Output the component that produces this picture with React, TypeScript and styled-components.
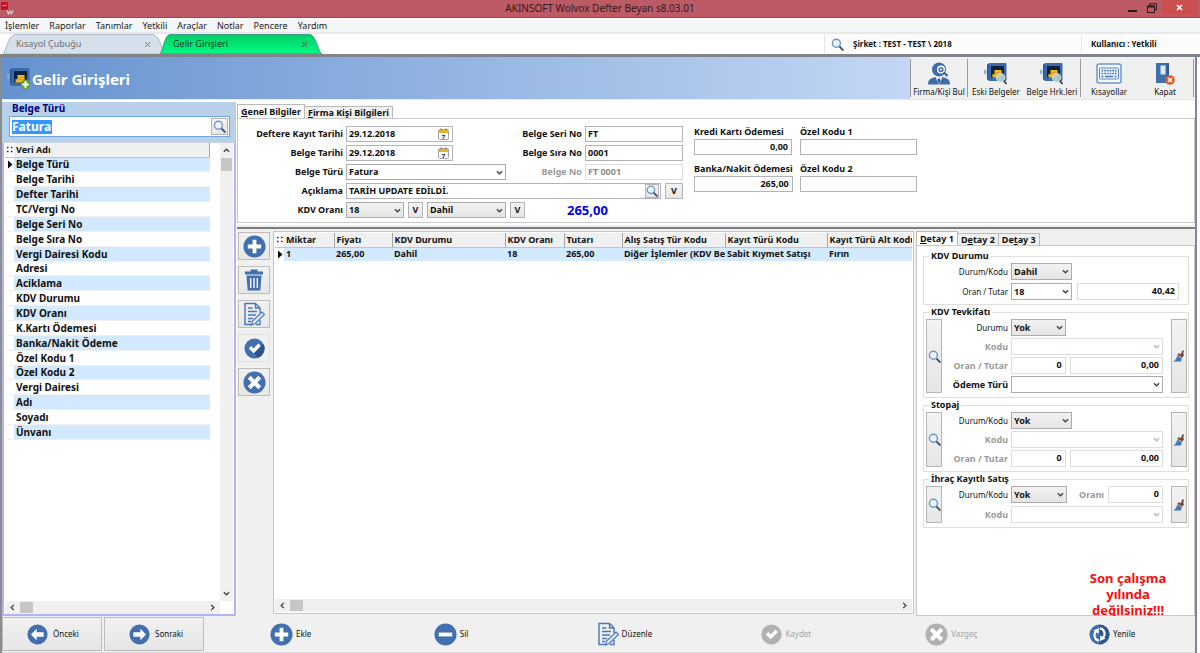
import React from 'react';
import styled, { createGlobalStyle, css } from 'styled-components';

const UI_FONT = '"Noto Sans", "Open Sans", sans-serif';
const BLUE = '#426fae';

const GlobalStyle = createGlobalStyle`
  *, *::before, *::after { box-sizing: border-box; }
  body { margin: 0; background: #fff; font: 9px/12px ${UI_FONT}; color: #111; }
  button, input, select { font: inherit; color: inherit; margin: 0; border-radius: 0; }
  svg { display: block; flex: none; }
`;

/* ---------- window frame ---------- */

const Page = styled.div`
  min-height: 100vh;
  display: flex;
  flex-direction: column;
  overflow: hidden;
`;

const TitleBar = styled.header`
  display: grid;
  grid-template-columns: 1fr auto 1fr;
  height: 18px;
  background: #bc5a66;
  border-bottom: 1px solid #a8434b;
  color: #33191d;
`;

const AppTitle = styled.h1`
  margin: 0;
  font-size: 10px;
  line-height: 17px;
  font-weight: 400;
`;

const WindowButtons = styled.div`
  display: flex;
  justify-content: flex-end;
  padding-right: 3px;
`;

const WindowButton = styled.button<{ $close?: boolean }>`
  display: grid;
  place-items: center;
  width: ${p => (p.$close ? 35 : 20)}px;
  height: 15px;
  padding: 0;
  border: 0;
  background: ${p => (p.$close ? '#c9504f' : 'transparent')};
`;

const MenuBar = styled.nav`
  display: flex;
  gap: 10px;
  height: 16px;
  padding: 0 5px;
  background: #f5f6f7;
  border-bottom: 2px solid #e9e9e9;
`;

const MenuLink = styled.a`
  color: #222;
  text-decoration: none;
  line-height: 15px;
`;

const TabStrip = styled.div`
  display: flex;
  height: 23px;
  padding-left: 3px;
  border-bottom: 3px solid #808388;
  background: #fff;
`;

const PageTab = styled.div<{ $active?: boolean }>`
  display: grid;
  width: 162px;
  height: 20px;
  margin-right: -5px;
  color: ${p => (p.$active ? '#123c22' : '#6a6f74')};
  > * { grid-area: 1 / 1; }
  > svg { width: 100%; height: 100%; }
`;

const PageTabRow = styled.div`
  display: flex;
  align-items: center;
  justify-content: space-between;
  padding: 0 14px 0 13px;
`;

const PlainButton = styled.button`
  display: flex;
  align-items: center;
  padding: 0;
  border: 0;
  background: none;
  white-space: nowrap;
`;

const Company = styled.div`
  display: flex;
  align-items: center;
  gap: 9px;
  width: 257px;
  margin-left: auto;
  padding-left: 6px;
  border-left: 1px solid #e4e4e4;
  background: #fcfcfc;
  font-size: 8px;
  font-weight: 700;
`;

const User = styled.div`
  display: flex;
  align-items: center;
  width: 119px;
  padding-left: 9px;
  border-left: 1px solid #e1ecf2;
  background: #fcfcfc;
  font-size: 8px;
  font-weight: 700;
`;

const Workspace = styled.main`
  flex: 1;
  display: flex;
  flex-direction: column;
  margin-right: 3px;
  border-left: 2px solid #8a8c90;
  border-right: 2px solid #937b99;
`;

/* ---------- heading band ---------- */

const Band = styled.div`
  display: flex;
  height: 43px;
  background: linear-gradient(90deg, #6592cf 0, #c3d7f4 908px);
  border-bottom: 1px solid #e3edf9;
`;

const BandTitle = styled.div`
  flex: 1;
  display: flex;
  align-items: center;
  gap: 1px;
  padding: 1px 0 0 5px;
  color: #fff;
  h2 { margin: 0; font-size: 15px; line-height: 20px; }
`;

const Toolbar = styled.div`
  display: flex;
  width: 285px;
  padding: 2px 1px 2px 0;
  background: #f0f0f0;
`;

const ToolGroup = styled.div<{ $grow: number }>`
  flex: ${p => p.$grow} 1 0;
  display: flex;
  border-left: 1px solid #9a9a9a;
  &:last-child { border-right: 1px solid #9a9a9a; }
`;

const ToolButton = styled.button`
  flex: 1 1 0;
  min-width: 0;
  display: flex;
  flex-direction: column;
  align-items: center;
  gap: 1px;
  padding: 3px 0 0;
  border: 0;
  background: none;
  font-size: 8px;
  line-height: 11px;
  white-space: nowrap;
`;

/* ---------- body ---------- */

const Body = styled.div`
  flex: 1;
  display: grid;
  grid-template-columns: 235px minmax(0, 1fr);
  background: #f0f0f0;
`;

const Sidebar = styled.aside`
  display: flex;
  flex-direction: column;
  padding-top: 2px;
  background: #fff;
`;

const FilterBox = styled.div`
  display: flex;
  flex-direction: column;
  gap: 2px;
  height: 40px;
  margin-right: 1px;
  padding: 0 6px 0 7px;
  background: #b9d1e8;
  label {
    padding-left: 3px;
    color: #00007c;
    font-size: 10px;
    font-weight: 700;
    line-height: 12px;
  }
`;

const FilterField = styled.div`
  display: flex;
  align-items: center;
  height: 21px;
  padding: 1px;
  border: 1px solid #6fa7df;
  background: #fff;
  input {
    width: 40px;
    height: 14px;
    margin-left: 1px;
    padding: 0;
    border: 0;
    outline: 0;
    background: #3397fd;
    color: #fff;
    font-size: 12px;
    font-weight: 700;
    line-height: 14px;
  }
  button { margin-left: auto; }
`;

const IconButton = styled.button<{ $w?: number }>`
  display: grid;
  place-items: center;
  width: ${p => p.$w ?? 15}px;
  align-self: stretch;
  padding: 0;
  border: 1px solid #b5b5b5;
  background: linear-gradient(#f3f3f3, #e6e6e6);
`;

const ListFrame = styled.div`
  flex: 1;
  display: grid;
  grid-template-columns: minmax(0, 1fr) 13px;
  grid-template-rows: 1fr 13px;
  margin-right: 1px;
  padding: 0 1px 0 1px;
  border: 2px solid #b3b3f3;
  border-top: 1px solid #d0d4ea;
  background: #fff;
`;

const DataTable = styled.table`
  width: 100%;
  table-layout: fixed;
  border-collapse: collapse;
  font-size: 9px;
  font-weight: 700;
  line-height: 12px;
  th, td {
    padding: 0 0 0 2px;
    overflow: hidden;
    white-space: nowrap;
    text-align: left;
  }
  th {
    height: 14px;
    background: #f0f0f0;
    border-right: 1px solid #a7a7a7;
    border-bottom: 1px solid #c3c3c3;
  }
  th:first-child, td:first-child {
    padding: 0;
    background: #fff;
    border-right: 0;
  }
`;

const FieldTable = styled(DataTable)`
  width: calc(100% - 10px);
  height: 297px;
  td { font-size: 10px; border-bottom: 1px solid #f0f0f0; }
  tbody tr:nth-child(odd) td:last-child { background: #d2e9ff; }
`;

const LineTable = styled(DataTable)`
  tbody td { height: 14px; background: #d2e9ff; }
  th:last-child { border-right: 0; }
`;

const ScrollTrack = styled.div<{ $vertical?: boolean }>`
  display: flex;
  flex-direction: ${p => (p.$vertical ? 'column' : 'row')};
  align-items: center;
  background: #f0f0f0;
  ${p => p.$vertical ? css`padding: 4px 0;` : css`padding: 0 4px;`}
`;

const ScrollThumb = styled.div<{ $vertical?: boolean }>`
  background: #c6c6c6;
  ${p => p.$vertical
    ? css`width: 11px; height: 13px; margin: 4px 0 auto;`
    : css`width: 13px; height: 11px; margin: 0 auto 0 4px;`}
`;

const Content = styled.section`
  display: flex;
  flex-direction: column;
  min-width: 0;
  padding-top: 4px;
  background: #fff;
`;

const Tabs = styled.div`
  display: flex;
  align-items: flex-end;
  height: 15px;
  margin-bottom: -1px;
`;

const Tab = styled.button<{ $active?: boolean }>`
  height: ${p => (p.$active ? 15 : 13)}px;
  padding: 0 3px;
  border: 1px solid #b9b9b9;
  border-bottom-color: ${p => (p.$active ? '#fff' : '#b9b9b9')};
  border-left-width: ${p => (p.$active ? 1 : 0)}px;
  background: ${p => (p.$active ? '#fff' : '#f0f0f0')};
  font-weight: 700;
  line-height: 11px;
  white-space: nowrap;
`;

const DocumentForm = styled.div`
  display: flex;
  gap: 11px;
  height: 105px;
  padding: 7px 0 0;
  border: 1px solid #c9c9c9;
  font-weight: 700;
`;

const FormGrid = styled.div`
  display: grid;
  grid-template-columns: 105px 160px 73px 98px;
  grid-auto-rows: 16px;
  gap: 3px;
  align-items: center;
`;

const Label = styled.label<{ $muted?: boolean }>`
  color: ${p => (p.$muted ? '#9b9b9b' : '#111')};
  text-align: right;
  white-space: nowrap;
`;

const Wide = styled.div`
  grid-column: 2 / -1;
  display: flex;
  gap: 4px;
  height: 16px;
`;

const PaymentGrid = styled.div`
  display: grid;
  grid-template-columns: 98px 117px;
  gap: 8px;
  align-content: start;
  div { display: grid; grid-template-rows: 12px 16px; gap: 1px; }
  label { text-align: left; white-space: nowrap; }
`;

const TextBox = styled.input<{ $right?: boolean; $faint?: boolean; $w?: number }>`
  width: ${p => (p.$w ? `${p.$w}px` : '100%')};
  min-width: 0;
  height: 100%;
  padding: 0 3px 2px 2px;
  border: 1px solid ${p => (p.$faint ? '#dedede' : '#b2b4b9')};
  background: #fff;
  font-weight: 700;
  text-align: ${p => (p.$right ? 'right' : 'left')};
  &:disabled { color: #8b8b8b; border-color: #dedede; }
`;

const BoxWithIcon = styled.div<{ $w: number; $pad: number }>`
  display: flex;
  align-items: center;
  width: ${p => p.$w}px;
  height: 16px;
  border: 1px solid #b2b4b9;
  background: #fff;
  padding-right: ${p => p.$pad}px;
  input { border: 0; }
`;

const SelectWrap = styled.div<{ $w?: number }>`
  display: grid;
  align-items: center;
  width: ${p => (p.$w ? `${p.$w}px` : '100%')};
  height: 100%;
  > * { grid-area: 1 / 1; }
  > svg { justify-self: end; margin-right: 3px; pointer-events: none; }
`;

const SelectBox = styled.select<{ $flat?: boolean }>`
  appearance: none;
  width: 100%;
  height: 100%;
  padding: 0 12px 0 2px;
  border: 1px solid #acacac;
  background: ${p => (p.$flat ? '#fff' : 'linear-gradient(#f2f2f2, #e5e5e5)')};
  font-weight: 700;
  opacity: 1;
  &:disabled { border-color: #dedede; }
`;

const SmallButton = styled.button<{ $w: number }>`
  width: ${p => p.$w}px;
  height: 16px;
  padding: 0;
  border: 1px solid #b5b5b5;
  background: linear-gradient(#f3f3f3, #e6e6e6);
  font-weight: 700;
  line-height: 14px;
`;

const Total = styled.output`
  margin-left: 38px;
  color: #0000f0;
  font-size: 13px;
  line-height: 16px;
`;

const Splitter = styled.div`
  height: 6px;
  border-top: 2px solid #fff;
  border-bottom: 2px solid #7d7d7d;
  background: #f0f0f0;
`;

const Lower = styled.div`
  flex: 1;
  display: grid;
  grid-template-columns: 34px minmax(0, 1fr) 279px;
  gap: 2px;
  padding-top: 2px;
  background: #f0f0f0;
`;

const ActionColumn = styled.div`
  display: flex;
  flex-direction: column;
  gap: 6px;
  padding: 1px 0 0 1px;
`;

const ActionButton = styled.button<{ $faint?: boolean }>`
  display: grid;
  place-items: center;
  width: 32px;
  height: 28px;
  padding: 0;
  border: 1px solid ${p => (p.$faint ? '#e2e2e2' : '#bdbdbd')};
  background: ${p => (p.$faint ? '#f0f0f0' : 'linear-gradient(#f1f1f1, #e7e7e7)')};
`;

const LinesFrame = styled.div`
  display: grid;
  grid-template-rows: 1fr 13px;
  margin-bottom: 2px;
  padding: 1px;
  border: 1px solid #c5c7cf;
  background: #fff;
`;

const Detail = styled.div`
  display: flex;
  flex-direction: column;
`;

const DetailPanel = styled.div`
  flex: 1;
  display: flex;
  flex-direction: column;
  gap: 2px;
  padding: 5px 5px 0 6px;
  border: 1px solid #c9c9c9;
  background: #fff;
`;

const Group = styled.fieldset`
  display: flex;
  min-width: 0;
  margin: 0;
  padding: 2px 1px 4px 2px;
  border: 1px solid #dfdfdf;
  legend {
    margin-left: 3px;
    padding: 0 2px;
    font-weight: 700;
    line-height: 10px;
  }
`;

const GroupRows = styled.div<{ $gap: number; $indent?: number }>`
  flex: 1;
  display: grid;
  grid-template-columns: ${p => p.$indent ?? 66}px minmax(0, 1fr);
  grid-auto-rows: 17px;
  column-gap: 3px;
  row-gap: ${p => p.$gap}px;
  align-items: center;
`;

const RowFields = styled.div<{ $end?: number }>`
  display: flex;
  align-items: center;
  justify-content: space-between;
  gap: 4px;
  height: 17px;
  padding-right: ${p => p.$end ?? 8}px;
`;

const ThinLabel = styled(Label)`
  font-size: 8px;
  font-weight: 400;
`;

const BoldLabel = styled(Label)`
  font-weight: 700;
`;

const Warning = styled.p`
  width: 90px;
  margin: auto 16px -3px auto;
  color: #f80c0c;
  font-size: 13px;
  font-weight: 700;
  line-height: 16px;
  text-align: center;
`;

/* ---------- footer ---------- */

const Footer = styled.footer`
  display: flex;
  align-items: center;
  gap: 2px;
  height: 37px;
  border-bottom: 1px solid #dcdcdc;
  background: #f0f0f0;
  font-size: 8px;
`;

const PagerButton = styled.button`
  display: flex;
  align-items: center;
  gap: 5px;
  width: 100px;
  height: 34px;
  padding: 0 0 0 24px;
  border: 1px solid #bdbdbd;
  background: linear-gradient(#f1f1f1, #e6e6e6);
`;

const Commands = styled.div`
  flex: 1;
  display: grid;
  grid-template-columns: repeat(5, 1fr) 106px;
  padding-left: 64px;
`;

const Command = styled(PlainButton)`
  gap: 3px;
  &:disabled { color: #a5a5a5; }
`;

/* ---------- icons ---------- */

const Chevron = ({ dir = 'down', color = '#444' }: { dir?: 'down' | 'up' | 'left' | 'right'; color?: string }) => {
  const turn = { down: 0, left: 90, up: 180, right: 270 }[dir];
  return (
    <svg width="7" height="7" viewBox="0 0 8 8">
      <path d="M1 2.5 4 5.5 7 2.5" fill="none" stroke={color} strokeWidth="1.6" transform={`rotate(${turn} 4 4)`} />
    </svg>
  );
};

const CrossMark = ({ color, width = 1 }: { color: string; width?: number }) => (
  <svg width="7" height="7" viewBox="0 0 7 7">
    <path d="M1 1 6 6M6 1 1 6" stroke={color} strokeWidth={width} />
  </svg>
);

const Magnifier = ({ size = 13 }: { size?: number }) => (
  <svg width={size} height={size} viewBox="0 0 14 14">
    <path d="m9 9 3.6 3.8" stroke="#46536a" strokeWidth="2.2" strokeLinecap="round" />
    <circle cx="5.8" cy="5.6" r="4.3" fill="#eef5fc" stroke="#6c95cc" strokeWidth="1.5" />
  </svg>
);

const Brush = () => (
  <svg width="12" height="12" viewBox="0 0 12 12">
    <path d="M9 .8 11 .3 10.300 3.800 11 5.200 9.500 7.400 4.300 5 5.300 3.300 8 4z" fill="#74483a" />
    <path d="M4.200 5.400 9 7.800 8 11.500H.3C2.200 10.500 3.600 8 4.200 5.400Z" fill="#4a7fc0" />
    <path d="M3 11.500 5.500 8.500M5.500 11.500 7.300 9" stroke="#2f5c97" strokeWidth=".6" />
  </svg>
);

const Calendar = () => (
  <svg width="11" height="12" viewBox="0 0 11 12">
    <rect x=".5" y="1.5" width="10" height="10" rx="1" fill="#fafafa" stroke="#a6a6a6" />
    <path d="M1 2h9v3H1z" fill="#eab52e" />
    <path d="M3 .3v2M8 .3v2" stroke="#8a7440" />
    <text x="5.5" y="10.5" textAnchor="middle" fontSize="6" fontWeight="700" fill="#222">7</text>
  </svg>
);

type Glyph = 'plus' | 'minus' | 'check' | 'cross' | 'left' | 'right' | 'refresh';

const glyphPaths: Record<Exclude<Glyph, 'refresh'>, string> = {
  plus: 'M10 5h4v5h5v4h-5v5h-4v-5H5v-4h5z',
  minus: 'M5 10h14v4H5z',
  check: 'm5.5 12 2.8-2.8 2.7 2.7 5.5-5.6 2.8 2.8-8.3 8.4z',
  cross: 'm8 5 4 4 4-4 3 3-4 4 4 4-3 3-4-4-4 4-3-3 4-4-4-4z',
  left: 'M4.5 12 11 5.5V9.500h8v5h-8v4z',
  right: 'M19.5 12 13 5.5V9.500H5v5h8v4z',
};

const RoundIcon = ({ glyph, size = 23, fill = BLUE, shade }: { glyph: Glyph; size?: number; fill?: string; shade?: boolean }) => (
  <svg width={size} height={size} viewBox="0 0 24 24">
    <circle cx="12" cy="12" r="11.5" fill={fill} />
    {shade && <path d="M19 8 12 17 15.500 22.900A11.500 11.500 0 0 0 22.500 7.300Z" fill="#2e5389" />}
    {glyph === 'refresh' ? (
      <>
        <path d="M12 .5a11.500 11.500 0 0 1 0 23z" fill="#2f588f" />
        <path d="M11.500 19C6.500 18.500 4.500 12.500 8 8M12.500 5c5 .5 7 6.500 3.500 11" fill="none" stroke="#fff" strokeWidth="2.300" />
        <path d="M5 7.500 11.500 4.500 11 11zM19 16.500 12.500 19.500 13 13z" fill="#fff" />
      </>
    ) : (
      <path d={glyphPaths[glyph]} fill="#fff" />
    )}
  </svg>
);

const Trash = () => (
  <svg width="20" height="22" viewBox="0 0 20 22">
    <path d="M6.500 2.500V.5h7v2H19v3H1v-3z" fill={BLUE} />
    <path d="M2.500 6.500h15l-1.200 15H3.700z" fill={BLUE} />
    <path d="M6.700 9v10M10 9v10M13.300 9v10" stroke="#edf1f7" strokeWidth="1.500" />
  </svg>
);

const EditSheet = () => (
  <svg width="21" height="24" viewBox="0 0 21 24">
    <path d="M16 11V6l-4.500-4.500H1v21h6M16 18v4.500h-4M11.500 1.500V6H16" fill="none" stroke="#4a78b6" strokeWidth="1.400" />
    <path d="M4 6h4.500M4 9.500h9M4 13h8M4 16.500h5M4 19.500h3" stroke="#4a78b6" strokeWidth="1.300" />
    <path d="m7.500 23 1-4L18 10l2.500 2.300L11.300 21.500z" fill="#dfe9f5" stroke="#4a78b6" strokeWidth="1.200" />
  </svg>
);

const Safe = ({ badge }: { badge: 'lens' | 'add' }) => (
  <svg width="24" height="23" viewBox="0 0 24 23">
    <path d="M1.500 7.500v5M.7 8.500v3" stroke="#7fb4d8" strokeWidth="1.500" />
    <path d="M3 2.500 6 1v18l-3-1.500z" fill="#2d568f" />
    <rect x="4.500" y="1" width="18" height="18" rx="1" fill="#3b6bab" />
    <path d="M7 4h13v11.500H7z" fill="#10213f" />
    <path d="M10.500 8h7v7.500h-9V12h2z" fill="#f3bd1c" />
    <path d="M10.500 10.300h7M8.500 12.700h9" stroke="#c88a09" strokeWidth=".7" />
    {badge === 'lens' ? (
      <>
        <path d="m19.500 18.500 3 3.500" stroke="#3d3f45" strokeWidth="1.800" />
        <circle cx="16.500" cy="15.500" r="4.300" fill="#b5d5d6" fillOpacity=".9" stroke="#e2d7b0" />
      </>
    ) : (
      <>
        <circle cx="18.500" cy="17.500" r="4.900" fill="#65a030" />
        <path d="M18.500 14.300v6.400M15.300 17.500h6.400" stroke="#fff" strokeWidth="2" />
      </>
    )}
  </svg>
);

const PersonSearch = () => (
  <svg width="24" height="23" viewBox="0 0 24 23">
    <circle cx="12" cy="7.500" r="7" fill="#3f6dab" />
    <path d="M1 22.500c0-5 3-6.500 7.500-7.500h7c4.500 1 7.500 2.500 7.500 7.500z" fill="#3f6dab" />
    <path d="m8.500 15 3.500 7.500 3.500-7.500z" fill="#f0f0f0" />
    <path d="m12 16 1.500 2-1.500 4-1.500-4z" fill="#2c5185" />
    <circle cx="14" cy="7.500" r="3.300" fill="#3f6dab" stroke="#fff" strokeWidth="1.400" />
    <circle cx="14" cy="7.500" r="1.100" fill="#fff" />
    <path d="m16.800 10.300 3.700 3.700" stroke="#315d9b" strokeWidth="2" />
  </svg>
);

const Keyboard = () => (
  <svg width="26" height="23" viewBox="0 0 26 23">
    <rect x="1" y="2" width="24" height="19" rx="2" fill="#f3f7fc" stroke="#6e98cf" strokeWidth="1.500" />
    <rect x="3.500" y="6" width="19" height="11" rx="1" fill="none" stroke="#5c89c5" />
    <path d="M5.500 8.700h15M5.500 11.500h15" stroke="#4274b5" strokeWidth="1.700" strokeDasharray="1.700 1" />
    <path d="M5.500 14.400h2M9 14.400h8M18.500 14.400h2" stroke="#4274b5" strokeWidth="1.500" />
  </svg>
);

const Door = () => (
  <svg width="22" height="23" viewBox="0 0 22 23">
    <path d="M2 1h13v20H2z" fill="#3f6fae" />
    <path d="M6.500 3.500h5v9h-5z" fill="#dcebf6" />
    <path d="M13 1h2v20h-2z" fill="#2f5a95" />
    <circle cx="16" cy="18" r="4.800" fill="#dd5a2e" />
    <path d="m14 16 4 4M18 16l-4 4" stroke="#fff" strokeWidth="1.500" />
  </svg>
);

const GridDots = () => (
  <svg width="9" height="8" viewBox="0 0 9 8">
    <path d="M2 1.500h1.500M6 1.500h1.500M2 5.500h1.500M6 5.500h1.500" stroke="#222" strokeWidth="1.500" />
  </svg>
);

const RowMarker = () => (
  <svg width="9" height="9" viewBox="0 0 9 9">
    <path d="M3 .5 7.500 4.500 3 8.500z" fill="#000" />
  </svg>
);

/* ---------- composed controls ---------- */

type ComboProps = { id?: string; value?: string; w?: number; flat?: boolean; disabled?: boolean; name?: string };

const Combo = ({ id, value = '', w, flat, disabled, name }: ComboProps) => (
  <SelectWrap $w={w}>
    <SelectBox id={id} $flat={flat} disabled={disabled} defaultValue={value} aria-label={name}>
      <option>{value}</option>
    </SelectBox>
    <Chevron color={disabled ? '#b5b5b5' : '#444'} />
  </SelectWrap>
);

const DateBox = ({ id, value }: { id: string; value: string }) => (
  <BoxWithIcon $w={107} $pad={3}>
    <TextBox id={id} defaultValue={value} />
    <PlainButton aria-label="Takvim"><Calendar /></PlainButton>
  </BoxWithIcon>
);

const HScroll = () => (
  <ScrollTrack>
    <Chevron dir="left" />
    <ScrollThumb />
    <Chevron dir="right" />
  </ScrollTrack>
);

const menus = ['İşlemler', 'Raporlar', 'Tanımlar', 'Yetkili', 'Araçlar', 'Notlar', 'Pencere', 'Yardım'];

const fields = [
  'Belge Türü', 'Belge Tarihi', 'Defter Tarihi', 'TC/Vergi No', 'Belge Seri No', 'Belge Sıra No',
  'Vergi Dairesi Kodu', 'Adresi', 'Aciklama', 'KDV Durumu', 'KDV Oranı', 'K.Kartı Ödemesi',
  'Banka/Nakit Ödeme', 'Özel Kodu 1', 'Özel Kodu 2', 'Vergi Dairesi', 'Adı', 'Soyadı', 'Ünvanı',
];

const columns: { title: string; width?: number; value: string }[] = [
  { title: 'Miktar', width: 50, value: '1' },
  { title: 'Fiyatı', width: 58, value: '265,00' },
  { title: 'KDV Durumu', width: 113, value: 'Dahil' },
  { title: 'KDV Oranı', width: 59, value: '18' },
  { title: 'Tutarı', width: 58, value: '265,00' },
  { title: 'Alış Satış Tür Kodu', width: 103, value: 'Diğer İşlemler (KDV Be' },
  { title: 'Kayıt Türü Kodu', width: 102, value: 'Sabit Kıymet Satışı' },
  { title: 'Kayıt Türü Alt Kodu', value: 'Fırın' },
];

export default function App() {
  return (
    <Page>
      <GlobalStyle />
      <TitleBar>
        <svg width="16" height="17" viewBox="0 0 16 17">
          <rect x="1" y="2" width="7" height="8" fill="#c4142a" />
          <path d="M2.500 5.500h4" stroke="#e98a8f" />
          <path d="m7 10 1.500 4L10 11l1.500 3 1.500-4" fill="none" stroke="#d8c7ca" strokeWidth="1.200" />
        </svg>
        <AppTitle>AKINSOFT Wolvox Defter Beyan s8.03.01</AppTitle>
        <WindowButtons>
          <WindowButton aria-label="Simge durumuna küçült">
            <svg width="9" height="9" viewBox="0 0 9 9"><path d="M0 8h9" stroke="#2c1a1d" strokeWidth="2" /></svg>
          </WindowButton>
          <WindowButton aria-label="Önceki boyut">
            <svg width="10" height="10" viewBox="0 0 10 10">
              <path d="M2.500 2V.8h7v6H8" fill="none" stroke="#2c1a1d" />
              <path d="M.5 3h7v6.500h-7z" fill="none" stroke="#2c1a1d" />
              <path d="M.5 3.500h7" stroke="#2c1a1d" strokeWidth="2" />
            </svg>
          </WindowButton>
          <WindowButton $close aria-label="Pencereyi kapat"><CrossMark color="#fff" width={1.6} /></WindowButton>
        </WindowButtons>
      </TitleBar>

      <MenuBar>
        {menus.map(m => <MenuLink key={m} href="#">{m}</MenuLink>)}
      </MenuBar>

      <TabStrip>
        <PageTab>
          <svg viewBox="0 0 162 20" preserveAspectRatio="none">
            <path d="M0 20C3 18 5 1 12 .5H150C157 1 159 18 162 20z" fill="#d6e0ea" stroke="#aebccb" />
          </svg>
          <PageTabRow>
            <PlainButton>Kısayol Çubuğu</PlainButton>
            <PlainButton aria-label="Sekmeyi kapat"><CrossMark color="#777" /></PlainButton>
          </PageTabRow>
        </PageTab>
        <PageTab $active>
          <svg viewBox="0 0 162 20" preserveAspectRatio="none">
            <defs>
              <linearGradient id="activeTab" x1="0" y1="0" x2="0" y2="1">
                <stop offset="0" stopColor="#00cf66" />
                <stop offset="1" stopColor="#00fb82" />
              </linearGradient>
            </defs>
            <path d="M0 20C3 18 4 1 10 .5H150C156 1 158 18 162 20z" fill="url(#activeTab)" stroke="#3f9a8a" />
          </svg>
          <PageTabRow>
            <PlainButton>Gelir Girişleri</PlainButton>
            <PlainButton aria-label="Sekmeyi kapat"><CrossMark color="#2c6b48" /></PlainButton>
          </PageTabRow>
        </PageTab>
        <Company><Magnifier />Şirket : TEST - TEST \ 2018</Company>
        <User>Kullanıcı : Yetkili</User>
      </TabStrip>

      <Workspace>
        <Band>
          <BandTitle>
            <Safe badge="add" />
            <h2>Gelir Girişleri</h2>
          </BandTitle>
          <Toolbar>
            <ToolGroup $grow={1}>
              <ToolButton><PersonSearch />Firma/Kişi Bul</ToolButton>
            </ToolGroup>
            <ToolGroup $grow={2}>
              <ToolButton><Safe badge="lens" />Eski Belgeler</ToolButton>
              <ToolButton><Safe badge="lens" />Belge Hrk.leri</ToolButton>
            </ToolGroup>
            <ToolGroup $grow={2}>
              <ToolButton><Keyboard />Kısayollar</ToolButton>
              <ToolButton><Door />Kapat</ToolButton>
            </ToolGroup>
          </Toolbar>
        </Band>

        <Body>
          <Sidebar>
            <FilterBox>
              <label htmlFor="filter">Belge Türü</label>
              <FilterField>
                <input id="filter" defaultValue="Fatura" />
                <IconButton $w={17} aria-label="Ara"><Magnifier /></IconButton>
              </FilterField>
            </FilterBox>
            <ListFrame>
              <div>
                <FieldTable>
                  <colgroup><col style={{ width: 9 }} /><col /></colgroup>
                  <thead><tr><th><GridDots /></th><th>Veri Adı</th></tr></thead>
                  <tbody>
                    {fields.map((f, i) => (
                      <tr key={f}><td>{i === 0 && <RowMarker />}</td><td>{f}</td></tr>
                    ))}
                  </tbody>
                </FieldTable>
              </div>
              <ScrollTrack $vertical>
                <Chevron dir="up" />
                <ScrollThumb $vertical />
                <Chevron />
              </ScrollTrack>
              <HScroll />
            </ListFrame>
          </Sidebar>

          <Content>
            <Tabs>
              <Tab $active><u>G</u>enel Bilgiler</Tab>
              <Tab><u>F</u>irma Kişi Bilgileri</Tab>
            </Tabs>
            <DocumentForm>
              <FormGrid>
                <Label htmlFor="regDate">Deftere Kayıt Tarihi</Label>
                <DateBox id="regDate" value="29.12.2018" />
                <Label htmlFor="serial">Belge Seri No</Label>
                <TextBox id="serial" defaultValue="FT" />

                <Label htmlFor="docDate">Belge Tarihi</Label>
                <DateBox id="docDate" value="29.12.2018" />
                <Label htmlFor="order">Belge Sıra No</Label>
                <TextBox id="order" defaultValue="0001" />

                <Label htmlFor="docType">Belge Türü</Label>
                <Combo id="docType" value="Fatura" flat />
                <Label htmlFor="docNo" $muted>Belge No</Label>
                <TextBox id="docNo" defaultValue="FT 0001" disabled />

                <Label htmlFor="note">Açıklama</Label>
                <Wide>
                  <BoxWithIcon $w={315} $pad={1}>
                    <TextBox id="note" defaultValue="TARİH UPDATE EDİLDİ." />
                    <IconButton aria-label="Açıklama ara"><Magnifier size={12} /></IconButton>
                  </BoxWithIcon>
                  <SmallButton $w={18}>V</SmallButton>
                </Wide>

                <Label htmlFor="vatRate">KDV Oranı</Label>
                <Wide>
                  <Combo id="vatRate" value="18" w={58} />
                  <SmallButton $w={15}>V</SmallButton>
                  <Combo value="Dahil" w={79} name="KDV Durumu" />
                  <SmallButton $w={15}>V</SmallButton>
                  <Total>265,00</Total>
                </Wide>
              </FormGrid>
              <PaymentGrid>
                <div><label htmlFor="card">Kredi Kartı Ödemesi</label><TextBox id="card" $right defaultValue="0,00" /></div>
                <div><label htmlFor="code1">Özel Kodu 1</label><TextBox id="code1" /></div>
                <div><label htmlFor="bank">Banka/Nakit Ödemesi</label><TextBox id="bank" $right defaultValue="265,00" /></div>
                <div><label htmlFor="code2">Özel Kodu 2</label><TextBox id="code2" /></div>
              </PaymentGrid>
            </DocumentForm>
            <Splitter />

            <Lower>
              <ActionColumn>
                <ActionButton aria-label="Ekle"><RoundIcon glyph="plus" /></ActionButton>
                <ActionButton aria-label="Sil"><Trash /></ActionButton>
                <ActionButton aria-label="Düzenle"><EditSheet /></ActionButton>
                <ActionButton aria-label="Kaydet" $faint><RoundIcon glyph="check" size={21} shade /></ActionButton>
                <ActionButton aria-label="Vazgeç"><RoundIcon glyph="cross" /></ActionButton>
              </ActionColumn>

              <LinesFrame>
                <div>
                  <LineTable>
                    <colgroup>
                      <col style={{ width: 9 }} />
                      {columns.map(c => <col key={c.title} style={{ width: c.width }} />)}
                    </colgroup>
                    <thead>
                      <tr><th><GridDots /></th>{columns.map(c => <th key={c.title}>{c.title}</th>)}</tr>
                    </thead>
                    <tbody>
                      <tr><td><RowMarker /></td>{columns.map(c => <td key={c.title}>{c.value}</td>)}</tr>
                    </tbody>
                  </LineTable>
                </div>
                <HScroll />
              </LinesFrame>

              <Detail>
                <Tabs>
                  <Tab $active><u>D</u>etay 1</Tab>
                  <Tab>D<u>e</u>tay 2</Tab>
                  <Tab>De<u>t</u>ay 3</Tab>
                </Tabs>
                <DetailPanel>
                  <Group>
                    <legend>KDV Durumu</legend>
                    <GroupRows $gap={3} $indent={82}>
                      <ThinLabel htmlFor="vatState">Durum/Kodu</ThinLabel>
                      <RowFields><Combo id="vatState" value="Dahil" w={61} /></RowFields>
                      <ThinLabel htmlFor="vatPct">Oran / Tutar</ThinLabel>
                      <RowFields>
                        <Combo id="vatPct" value="18" w={61} flat />
                        <TextBox aria-label="Tutar" $right $faint $w={102} defaultValue="40,42" />
                      </RowFields>
                    </GroupRows>
                  </Group>

                  <Group>
                    <legend>KDV Tevkifatı</legend>
                    <IconButton $w={16} aria-label="Tevkifat ara"><Magnifier /></IconButton>
                    <GroupRows $gap={2}>
                      <ThinLabel htmlFor="whState">Durumu</ThinLabel>
                      <RowFields><Combo id="whState" value="Yok" w={55} /></RowFields>
                      <BoldLabel htmlFor="whCode" $muted>Kodu</BoldLabel>
                      <RowFields><Combo id="whCode" flat disabled /></RowFields>
                      <BoldLabel htmlFor="whRate" $muted>Oran / Tutar</BoldLabel>
                      <RowFields>
                        <TextBox id="whRate" $right $faint $w={55} defaultValue="0" />
                        <TextBox aria-label="Tutar" $right $faint $w={94} defaultValue="0,00" />
                      </RowFields>
                      <BoldLabel htmlFor="payType">Ödeme Türü</BoldLabel>
                      <RowFields><Combo id="payType" flat /></RowFields>
                    </GroupRows>
                    <IconButton $w={16} aria-label="Tevkifat temizle"><Brush /></IconButton>
                  </Group>

                  <Group>
                    <legend>Stopaj</legend>
                    <IconButton $w={16} aria-label="Stopaj ara"><Magnifier /></IconButton>
                    <GroupRows $gap={2}>
                      <ThinLabel htmlFor="stState">Durum/Kodu</ThinLabel>
                      <RowFields><Combo id="stState" value="Yok" w={61} /></RowFields>
                      <BoldLabel htmlFor="stCode" $muted>Kodu</BoldLabel>
                      <RowFields><Combo id="stCode" flat disabled /></RowFields>
                      <BoldLabel htmlFor="stRate" $muted>Oran / Tutar</BoldLabel>
                      <RowFields>
                        <TextBox id="stRate" $right $faint $w={55} defaultValue="0" />
                        <TextBox aria-label="Tutar" $right $faint $w={94} defaultValue="0,00" />
                      </RowFields>
                    </GroupRows>
                    <IconButton $w={16} aria-label="Stopaj temizle"><Brush /></IconButton>
                  </Group>

                  <Group>
                    <legend>İhraç Kayıtlı Satış</legend>
                    <IconButton $w={16} aria-label="İhraç ara"><Magnifier /></IconButton>
                    <GroupRows $gap={3}>
                      <ThinLabel htmlFor="exState">Durum/Kodu</ThinLabel>
                      <RowFields>
                        <Combo id="exState" value="Yok" w={56} />
                        <RowFields $end={0}>
                          <BoldLabel htmlFor="exRate" $muted>Oranı</BoldLabel>
                          <TextBox id="exRate" $right $faint $w={55} defaultValue="0" />
                        </RowFields>
                      </RowFields>
                      <BoldLabel htmlFor="exCode" $muted>Kodu</BoldLabel>
                      <RowFields><Combo id="exCode" flat disabled /></RowFields>
                    </GroupRows>
                    <IconButton $w={16} aria-label="İhraç temizle"><Brush /></IconButton>
                  </Group>

                  <Warning>Son çalışma yılında değilsiniz!!!</Warning>
                </DetailPanel>
              </Detail>
            </Lower>
          </Content>
        </Body>

        <Footer>
          <PagerButton><RoundIcon glyph="left" size={21} />Önceki</PagerButton>
          <PagerButton><RoundIcon glyph="right" size={21} />Sonraki</PagerButton>
          <Commands>
            <Command><RoundIcon glyph="plus" />Ekle</Command>
            <Command><RoundIcon glyph="minus" />Sil</Command>
            <Command><EditSheet />Düzenle</Command>
            <Command disabled><RoundIcon glyph="check" size={21} fill="#b1b1b1" />Kaydet</Command>
            <Command disabled><RoundIcon glyph="cross" fill="#b1b1b1" />Vazgeç</Command>
            <Command><RoundIcon glyph="refresh" size={21} />Yenile</Command>
          </Commands>
        </Footer>
      </Workspace>
    </Page>
  );
}
